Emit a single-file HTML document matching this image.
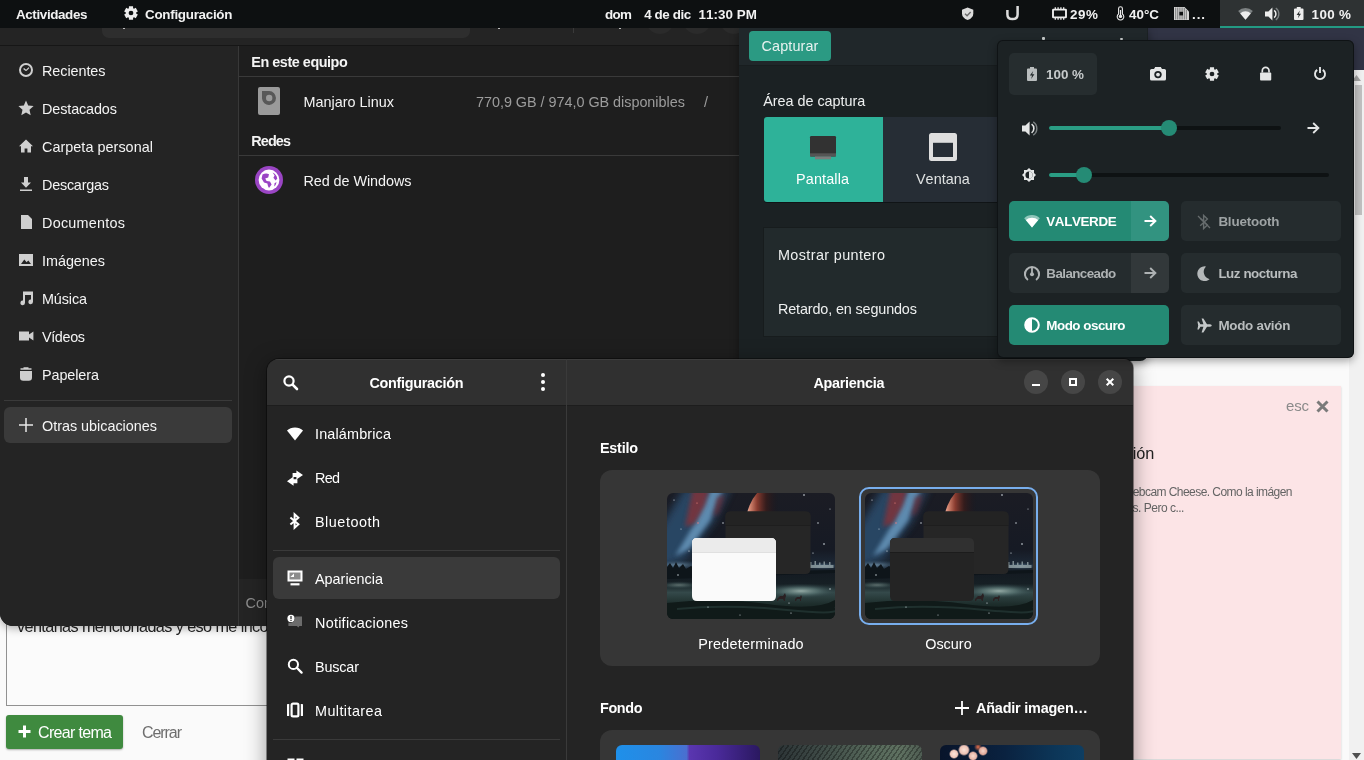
<!DOCTYPE html>
<html lang="es">
<head>
<meta charset="utf-8">
<title>Escritorio</title>
<style>
*{box-sizing:border-box;margin:0;padding:0}
html,body{width:1364px;height:760px;overflow:hidden;background:#fafafa}
body{position:relative;font-family:"Liberation Sans","DejaVu Sans",sans-serif;font-size:14.4px;color:#fff;line-height:1;font-kerning:none}
.abs{position:absolute}
.t{position:absolute;white-space:nowrap;line-height:20px;height:20px;will-change:transform}
.b{font-weight:bold}
svg{position:absolute;overflow:visible}
.win{position:absolute;overflow:hidden}
</style>
</head>
<body>
<div id="web" class="win" style="left:0;top:28px;width:1364px;height:732px;background:#fafafa">
<div class="abs" style="left:1140px;top:0px;width:224px;height:42px;background:#313445;"></div>
<div class="abs" style="left:1349px;top:42px;width:15px;height:690px;background:#f1f1f1;"></div>
<div class="abs" style="left:1355px;top:57px;width:7px;height:130px;background:#c1c1c1;"></div>
<svg style="left:1352px;top:47px;" width="9" height="6" viewBox="0 0 9 6"><path d="M0 6 L4.5 0 L9 6 Z" fill="#a3a3a3"/></svg>
<svg style="left:1352px;top:725px;" width="9" height="6" viewBox="0 0 9 6"><path d="M0 0 L9 0 L4.5 6 Z" fill="#505050"/></svg>
<div class="abs" style="left:1100px;top:358px;width:241px;height:373px;background:#fce4e6;box-shadow:0 1px 2px rgba(0,0,0,.18);"></div>
<div class="t" style="left:1286px;top:368px;font-size:15px;letter-spacing:-0.171px;color:#8a8a8a;">esc</div>
<svg style="left:1316.2px;top:372px;" width="13" height="13" viewBox="0 0 13 13"><path d="M1.5 1.5 L11.5 11.5 M11.5 1.5 L1.5 11.5" stroke="#7a7a7a" stroke-width="3" fill="none"/></svg>
<div class="t" style="left:1084px;top:415px;font-size:16.3px;padding-left:0.8px;margin-left:-1px;color:#222;">Discusión</div>
<div class="t" style="left:1125px;top:454px;font-size:12px;padding-left:0.6px;margin-left:-1px;letter-spacing:-0.553px;color:#646464;">webcam Cheese. Como la imágen</div>
<div class="t" style="left:1126px;top:470px;font-size:12px;padding-left:1.4px;margin-left:-1px;letter-spacing:-0.498px;color:#646464;">as. Pero c...</div>
<div class="abs" style="left:6px;top:532px;width:400px;height:146px;background:#fbfbfb;border:1px solid #919191;"></div>
<div class="t" style="left:17px;top:588px;font-size:16.2px;letter-spacing:-0.584px;color:#222;">ventanas mencionadas y eso me incomoda un poco</div>
<div class="abs" style="left:6px;top:686.5px;width:117px;height:34.5px;background:#3f8a3f;border-radius:3px;box-shadow:0 1px 2px rgba(0,0,0,.3);"></div>
<svg style="left:18px;top:697px;" width="13" height="13" viewBox="0 0 13 13"><path d="M6.5 0.5 V12.5 M0.5 6.5 H12.5" stroke="#fff" stroke-width="3" fill="none"/></svg>
<div class="t" style="left:38px;top:695px;font-size:16px;letter-spacing:-0.669px;color:#fff;">Crear tema</div>
<div class="t" style="left:142px;top:695px;font-size:16px;letter-spacing:-1.067px;color:#6e6e6e;">Cerrar</div>
</div>
<div id="topbar" class="win" style="left:0;top:0;width:1364px;height:28px;background:#0d1011;z-index:60">
<div class="t b" style="left:16px;top:5px;font-size:13.4px;letter-spacing:-0.372px;color:#f2f2f2;">Actividades</div>
<div class="t b" style="left:145px;top:5px;font-size:13.4px;letter-spacing:-0.276px;color:#f2f2f2;">Configuración</div>
<div class="t b" style="left:605px;top:5px;font-size:13.4px;letter-spacing:-0.643px;color:#f2f2f2;">dom</div>
<div class="t b" style="left:644px;top:5px;font-size:13.4px;padding-left:1.2px;margin-left:-1px;letter-spacing:-0.414px;color:#f2f2f2;">4 de dic</div>
<div class="t b" style="left:699px;top:5px;font-size:13.4px;padding-left:0.6px;margin-left:-1px;letter-spacing:0.035px;color:#f2f2f2;">11:30 PM</div>
<div class="t b" style="left:1070px;top:5px;font-size:13.4px;letter-spacing:0.590px;color:#f2f2f2;">29%</div>
<div class="t b" style="left:1129px;top:5px;font-size:13.4px;letter-spacing:0.020px;color:#f2f2f2;">40°C</div>
<div class="t b" style="left:1192px;top:5px;font-size:13.4px;letter-spacing:0.916px;color:#f2f2f2;">...</div>
<div class="abs" style="left:1220px;top:0px;width:144px;height:28px;background:#2e3233;"></div>
<div class="abs" style="left:1220px;top:26px;width:144px;height:2px;background:#239a83;"></div>
<div class="t b" style="left:1312px;top:5px;font-size:13.4px;padding-left:0.6px;margin-left:-1px;letter-spacing:0.351px;color:#f2f2f2;">100 %</div>
</div>
<div class="win" style="left:0;top:0;width:1364px;height:28px;z-index:61">
<svg style="left:124px;top:6px;" width="14" height="14" viewBox="0 0 16 16"><path fill-rule="evenodd" d="M5.59 2.61 L5.64 0.36 L10.36 0.36 L10.41 2.61 L11.46 3.22 L13.44 2.13 L15.80 6.23 L13.87 7.39 L13.87 8.61 L15.80 9.77 L13.44 13.87 L11.46 12.78 L10.41 13.39 L10.36 15.64 L5.64 15.64 L5.59 13.39 L4.54 12.78 L2.56 13.87 L0.20 9.77 L2.13 8.61 L2.13 7.39 L0.20 6.23 L2.56 2.13 L4.54 3.22 Z M8 5.30 A2.7 2.7 0 1 0 8 10.70 A2.7 2.7 0 1 0 8 5.30 Z" fill="#ededed"/></svg>
<svg style="left:962px;top:6.5px;" width="11.3" height="13.5" viewBox="0 0 12 13.5"><path d="M6 0 L12 2.600 V6.400 Q12 11 6 13.500 Q0 11 0 6.400 V2.600 Z" fill="#dcdcdc"/><path d="M3.200 6.800 L5.400 8.800 L9.200 5" fill="none" stroke="#6a6a6a" stroke-width="1.500"/></svg>
<svg style="left:1005.5px;top:5.8px;" width="13" height="14.5" viewBox="0 0 13 14.5"><path d="M1.400 4 V8.400 Q1.400 13.100 6.500 13.100 Q11.600 13.100 11.600 8.400 V0" fill="none" stroke="#dcdcdc" stroke-width="2.500"/></svg>
<svg style="left:1052px;top:6.5px;" width="15" height="13" viewBox="0 0 15 13"><rect x="1" y="2.600" width="13" height="7.800" rx=".4" fill="none" stroke="#ededed" stroke-width="1.900"/><path d="M3.300 0.300 V2 M6.100 0.300 V2 M8.900 0.300 V2 M11.700 0.300 V2 M3.300 11 V12.700 M6.100 11 V12.700 M8.900 11 V12.700 M11.700 11 V12.700" stroke="#ededed" stroke-width="1.300"/></svg>
<svg style="left:1116px;top:6px;" width="9" height="14" viewBox="0 0 9 14"><path d="M4.5 0.700 A1.900 1.900 0 0 1 6.400 2.600 V8 A3.300 3.300 0 1 1 2.600 8 V2.600 A1.900 1.900 0 0 1 4.500 0.700 Z" fill="none" stroke="#ededed" stroke-width="1.1"/><circle cx="4.5" cy="10.4" r="1.7" fill="#ededed"/><rect x="3.9" y="4" width="1.2" height="6" fill="#ededed"/></svg>
<svg style="left:1174px;top:6.5px;" width="15" height="13" viewBox="0 0 15 13"><path d="M0 0 H10.500 L15 4.500 V13 H0 Z" fill="#d4d4d4"/><path d="M1.600 0.500 V12.500 M3.400 0.500 V12.500 M5.200 0.500 V12.500 M7 0.500 V12.500 M8.800 0.500 V12.500 M10.600 1 V12.500 M12.400 3 V12.500" stroke="#0d1011" stroke-width=".55" opacity=".75"/><rect x="5.400" y="4.800" width="3.600" height="3.600" fill="#0d1011"/></svg>
<svg style="left:1237.5px;top:7px;" width="15" height="13" viewBox="0 0 15 13"><path d="M7.5 12.8 L0.2 4 Q3.200 1 7.500 1 Q11.800 1 14.800 4 Z" fill="#7d8283"/><path d="M7.500 12.800 L2.200 6.400 Q4.400 4.200 7.500 4.200 Q10.600 4.200 12.800 6.400 Z" fill="#ededed"/></svg>
<svg style="left:1264.5px;top:6.5px;" width="15" height="14" viewBox="0 0 15 14"><path d="M0 4.400 H3.400 L7.400 0.600 V13.400 L3.400 9.600 H0 Z" fill="#ededed"/><path d="M9.200 3.400 A4.600 4.600 0 0 1 9.200 10.600" fill="none" stroke="#ededed" stroke-width="1.500"/><path d="M10.800 1 A7.400 7.400 0 0 1 10.800 13" fill="none" stroke="#7d8283" stroke-width="1.300"/></svg>
<svg style="left:1294px;top:7px;" width="9.5" height="13" viewBox="0 0 9.5 13"><path d="M2.800 0 H6.700 V1.500 H8.500 Q9.500 1.500 9.500 2.500 V12 Q9.500 13 8.500 13 H1 Q0 13 0 12 V2.500 Q0 1.500 1 1.500 H2.800 Z" fill="#ededed"/><path d="M5.900 3.600 L2.600 8 H4.700 L3.900 11.200 L7 6.800 H4.900 Z" fill="#2e3233"/></svg>
</div>
<div id="files" class="win" style="left:0;top:28px;width:739px;height:598px;background:#1e1e1e;border-radius:0 0 0 13px;z-index:10;box-shadow:0 2px 10px rgba(0,0,0,.35)">
<div class="abs" style="left:0px;top:0px;width:739px;height:18px;background:#242424;"></div>
<div class="abs" style="left:0px;top:17px;width:739px;height:1px;background:#161616;"></div>
<div class="abs" style="left:102px;top:-8px;width:368px;height:18px;background:#2e2e2e;border-radius:7px;"></div>
<div class="abs" style="left:573px;top:0px;width:1px;height:5px;background:#3a3a3a;"></div>
<div class="abs" style="left:646px;top:-22.5px;width:28px;height:28px;background:#2b2b2b;border-radius:14px;"></div>
<div class="abs" style="left:683px;top:-22.5px;width:28px;height:28px;background:#2b2b2b;border-radius:14px;"></div>
<div class="abs" style="left:719.5px;top:-22.5px;width:28px;height:28px;background:#2b2b2b;border-radius:14px;"></div>
<div class="abs" style="left:123px;top:0px;width:2px;height:1px;background:#bdbdbd;"></div>
<div class="abs" style="left:498px;top:0px;width:2px;height:1px;background:#bdbdbd;"></div>
<div class="abs" style="left:619px;top:0px;width:2px;height:1px;background:#bdbdbd;"></div>
<div class="abs" style="left:0px;top:18px;width:238px;height:580px;background:#242424;"></div>
<div class="abs" style="left:238px;top:18px;width:1px;height:580px;background:#383838;"></div>
<div class="t" style="left:42px;top:33px;font-size:14.4px;letter-spacing:-0.067px;color:#f4f4f4;">Recientes</div>
<div class="t" style="left:42px;top:71px;font-size:14.4px;letter-spacing:-0.116px;color:#f4f4f4;">Destacados</div>
<div class="t" style="left:42px;top:109px;font-size:14.4px;letter-spacing:0.035px;color:#f4f4f4;">Carpeta personal</div>
<div class="t" style="left:42px;top:147px;font-size:14.4px;letter-spacing:-0.229px;color:#f4f4f4;">Descargas</div>
<div class="t" style="left:42px;top:185px;font-size:14.4px;letter-spacing:0.240px;color:#f4f4f4;">Documentos</div>
<div class="t" style="left:42px;top:223px;font-size:14.4px;letter-spacing:-0.034px;color:#f4f4f4;">Imágenes</div>
<div class="t" style="left:42px;top:261px;font-size:14.4px;letter-spacing:-0.122px;color:#f4f4f4;">Música</div>
<div class="t" style="left:42px;top:299px;font-size:14.4px;letter-spacing:-0.366px;color:#f4f4f4;">Vídeos</div>
<div class="t" style="left:42px;top:337px;font-size:14.4px;letter-spacing:-0.092px;color:#f4f4f4;">Papelera</div>
<div class="abs" style="left:4px;top:372px;width:228px;height:1px;background:#3a3a3a;"></div>
<div class="abs" style="left:4px;top:379px;width:228px;height:36px;background:#3a3a3a;border-radius:6px;"></div>
<div class="t" style="left:42px;top:388px;font-size:14.4px;letter-spacing:-0.016px;color:#f4f4f4;">Otras ubicaciones</div>
<svg style="left:18px;top:34px;" width="16" height="16" viewBox="0 0 16 16"><circle cx="8" cy="8" r="6" fill="none" stroke="#cfcfcf" stroke-width="2"/><path d="M8 8.6 L5.6 6.4 M8 8.6 L11 5.6" stroke="#cfcfcf" stroke-width="1.3" fill="none"/></svg>
<svg style="left:18px;top:72px;" width="16" height="16" viewBox="0 0 16 16"><path d="M8 0.6 L10.2 5.6 L15.6 6.1 L11.5 9.8 L12.7 15.2 L8 12.4 L3.3 15.2 L4.5 9.8 L0.4 6.1 L5.8 5.6 Z" fill="#cfcfcf"/></svg>
<svg style="left:18px;top:110px;" width="16" height="16" viewBox="0 0 16 16"><path d="M8 1.5 L1 8.2 H3 V14.5 H6.6 V10.4 H9.4 V14.5 H13 V8.2 H15 Z" fill="#cfcfcf"/></svg>
<svg style="left:18px;top:148px;" width="16" height="16" viewBox="0 0 16 16"><path d="M6 1 H10 V6.5 H13 L8 11.8 L3 6.5 H6 Z M2 13.4 H14 V15 H2 Z" fill="#cfcfcf"/></svg>
<svg style="left:18px;top:186px;" width="16" height="16" viewBox="0 0 16 16"><path d="M3 1 H10 L14 5 V15 H3 Z" fill="#cfcfcf"/></svg>
<svg style="left:18px;top:224px;" width="16" height="16" viewBox="0 0 16 16"><path d="M1 2 H15 V14 H1 Z" fill="#cfcfcf"/><path d="M3 12 L6.3 7.6 L8.6 10.2 L10.3 8.6 L13 12 Z" fill="#242424"/></svg>
<svg style="left:18px;top:262px;" width="16" height="16" viewBox="0 0 16 16"><path d="M5 1.5 H15 V11.8 A2.3 2.3 0 1 1 13 9.6 V5 H7 V12.8 A2.3 2.3 0 1 1 5 10.6 Z" fill="#cfcfcf"/></svg>
<svg style="left:18px;top:300px;" width="16" height="16" viewBox="0 0 16 16"><path d="M1 3.5 H11 V6.5 L15.4 3.6 V12.4 L11 9.5 V12.5 H1 Z" fill="#cfcfcf"/></svg>
<svg style="left:18px;top:338px;" width="16" height="16" viewBox="0 0 16 16"><path d="M2.5 2.2 H5.5 V1.2 H10.5 V2.2 H13.5 V3.8 H2.5 Z M2 5 H14 V11.5 Q14 14.8 10.8 14.8 H5.2 Q2 14.8 2 11.5 Z" fill="#cfcfcf"/></svg>
<svg style="left:18px;top:389px;" width="16" height="16" viewBox="0 0 16 16"><path d="M8 1 V15 M1 8 H15" stroke="#e8e8e8" stroke-width="1.5" fill="none"/></svg>
<div class="t b" style="left:251px;top:24px;font-size:14.4px;padding-left:1.3px;margin-left:-1px;letter-spacing:-0.455px;color:#f4f4f4;">En este equipo</div>
<div class="abs" style="left:239px;top:48px;width:500px;height:1px;background:#3a3a3a;"></div>
<div class="t" style="left:303px;top:64px;font-size:14.4px;padding-left:1.4px;margin-left:-1px;letter-spacing:0.012px;color:#f4f4f4;">Manjaro Linux</div>
<div class="t" style="left:476px;top:64px;font-size:14.4px;letter-spacing:-0.025px;color:#9c9c9c;">770,9 GB / 974,0 GB disponibles</div>
<div class="t" style="left:704px;top:64px;font-size:14.4px;color:#9c9c9c;">/</div>
<div class="t b" style="left:251px;top:103px;font-size:14.4px;padding-left:1.3px;margin-left:-1px;letter-spacing:-0.880px;color:#f4f4f4;">Redes</div>
<div class="abs" style="left:239px;top:127px;width:500px;height:1px;background:#3a3a3a;"></div>
<div class="t" style="left:303px;top:143px;font-size:14.4px;padding-left:1.4px;margin-left:-1px;letter-spacing:-0.050px;color:#f4f4f4;">Red de Windows</div>
<svg style="left:258px;top:59px;" width="22" height="28" viewBox="0 0 22 28"><rect x="0" y="0" width="22" height="28" rx="2" fill="#9a9a9a"/><path d="M4 4 H11.300 A7 7 0 1 1 4 11.600 Z" fill="#585858"/><circle cx="11.200" cy="11" r="3.200" fill="#9a9a9a"/></svg>
<svg style="left:255px;top:138px;" width="28" height="28" viewBox="0 0 28 28"><circle cx="14" cy="14" r="14" fill="#9a45c4"/><circle cx="14" cy="14" r="10.4" fill="#ffffff"/><path d="M7.5 8.5 Q11 6.5 14 8.2 L13.2 11.4 L10.2 12.6 L11.6 15 L15 15.6 L16.6 18.4 L14 22 Q12.6 20 12.4 17.6 L9 16.6 L6.6 12.6 Z M17.6 6.6 Q21.5 8.6 22.3 12.4 L20.6 14.6 L18.4 11.8 L19.6 9.4 Z M19.6 17 L21.6 16.2 Q21 19 19.2 20.6 Z" fill="#9a45c4"/></svg>
<div class="abs" style="left:239px;top:551px;width:500px;height:47px;background:#242424;"></div>
<div class="t" style="left:246px;top:565px;font-size:14.4px;padding-left:0.6px;margin-left:-1px;color:#8e8e8e;">Conectar</div>
</div>
<div id="shot" class="win" style="left:739px;top:28px;width:409px;height:333px;background:#1b2123;border-radius:0 0 8px 0;z-index:12;box-shadow:0 2px 10px rgba(0,0,0,.4)">
<div class="abs" style="left:0px;top:0px;width:408px;height:38px;background:#20272a;"></div>
<div class="abs" style="left:0px;top:37px;width:408px;height:1px;background:#181d1f;"></div>
<div class="abs" style="left:10px;top:3px;width:82px;height:30px;background:#2b9a83;border-radius:4px;"></div>
<div class="t" style="left:23px;top:8px;font-size:14.4px;padding-left:0.6px;margin-left:-1px;letter-spacing:0.111px;color:#e8f2f0;">Capturar</div>
<div class="abs" style="left:303px;top:9px;width:3px;height:3px;background:#c9cdcd;border-radius:1px;"></div>
<div class="abs" style="left:381px;top:10px;width:3px;height:2px;background:#c9cdcd;border-radius:1px;"></div>
<div class="t" style="left:24px;top:63px;font-size:14.4px;padding-left:1.3px;margin-left:-1px;letter-spacing:-0.033px;color:#eef0f0;">Área de captura</div>
<div class="abs" style="left:25px;top:89px;width:252px;height:86px;background:#101416;border-radius:3px;"></div>
<div class="abs" style="left:25px;top:89px;width:119px;height:85px;background:#2eb299;border-radius:3px 0 0 3px;"></div>
<div class="abs" style="left:144px;top:89px;width:130px;height:85px;background:#262d35;"></div>
<svg style="left:71px;top:108px;" width="26" height="23.5" viewBox="0 0 26 23.5"><rect x="0" y="0" width="26" height="20.500" rx="1.200" fill="#323232"/><rect x="0" y="17.300" width="26" height="3.200" fill="#555555"/><rect x="5" y="20.500" width="16" height="2.800" fill="#7c7c7c"/></svg>
<div class="t" style="left:57px;top:141px;font-size:14.4px;letter-spacing:0.137px;color:#ffffff;">Pantalla</div>
<svg style="left:190px;top:105px;" width="28" height="28" viewBox="0 0 28 28"><rect x="0" y="0" width="28" height="28" rx="2.500" fill="#dedede"/><rect x="4" y="9.800" width="20" height="14.200" fill="#262d35"/></svg>
<div class="t" style="left:177px;top:141px;font-size:14.4px;letter-spacing:0.024px;color:#dfe2e2;">Ventana</div>
<div class="abs" style="left:24px;top:199px;width:300px;height:110px;background:#222a2c;border:1px solid #171c1d;"></div>
<div class="t" style="left:39px;top:217px;font-size:14.4px;letter-spacing:0.383px;color:#eef0f0;">Mostrar puntero</div>
<div class="t" style="left:39px;top:271px;font-size:14.4px;letter-spacing:-0.142px;color:#eef0f0;">Retardo, en segundos</div>
</div>
<div id="qs" class="win" style="left:997px;top:40px;width:356.5px;height:317.5px;background:#1c2224;border-radius:6px;z-index:30;box-shadow:inset 0 0 0 1px rgba(5,8,9,.55),0 3px 8px rgba(0,0,0,.35)">
<div class="abs" style="left:12px;top:13px;width:88px;height:42px;background:#262d2f;border-radius:5px;"></div>
<svg style="left:30px;top:27px;" width="10" height="14" viewBox="0 0 10 14"><path d="M3 0 H7 V1.6 H9 Q10 1.6 10 2.6 V13 Q10 14 9 14 H1 Q0 14 0 13 V2.6 Q0 1.6 1 1.6 H3 Z" fill="#b9bdbe"/><path d="M6.2 4 L2.8 8.6 H5 L4.2 12 L7.4 7.2 H5.2 Z" fill="#262d2f"/></svg>
<div class="t b" style="left:49px;top:25px;font-size:13.4px;color:#c6cacb;">100 %</div>
<svg style="left:152.5px;top:27px;" width="16" height="13.5" viewBox="0 0 16 13.5"><path d="M5.2 0 H10.8 L12 2 H14.4 Q16 2 16 3.6 V12 Q16 13.5 14.4 13.5 H1.6 Q0 13.5 0 12 V3.6 Q0 2 1.6 2 H4 Z" fill="#e4e6e6"/><circle cx="8" cy="7.6" r="3.7" fill="#1c2224"/><circle cx="8" cy="7.6" r="1.9" fill="#e4e6e6"/></svg>
<svg style="left:207.5px;top:27px;" width="14" height="14" viewBox="0 0 16 16"><path fill-rule="evenodd" d="M5.59 2.61 L5.64 0.36 L10.36 0.36 L10.41 2.61 L11.46 3.22 L13.44 2.13 L15.80 6.23 L13.87 7.39 L13.87 8.61 L15.80 9.77 L13.44 13.87 L11.46 12.78 L10.41 13.39 L10.36 15.64 L5.64 15.64 L5.59 13.39 L4.54 12.78 L2.56 13.87 L0.20 9.77 L2.13 8.61 L2.13 7.39 L0.20 6.23 L2.56 2.13 L4.54 3.22 Z M8 5.30 A2.7 2.7 0 1 0 8 10.70 A2.7 2.7 0 1 0 8 5.30 Z" fill="#e4e6e6"/></svg>
<svg style="left:263px;top:27px;" width="11.3" height="13.5" viewBox="0 0 12 14.5"><path d="M2.4 6 V4 A3.6 3.6 0 0 1 9.6 4 V6" fill="none" stroke="#e4e6e6" stroke-width="1.8"/><rect x="0" y="6" width="12" height="8.5" rx="1" fill="#e4e6e6"/></svg>
<svg style="left:316.5px;top:26.799999999999997px;" width="12" height="12.6" viewBox="0 0 13 14"><path d="M3.4 3.2 A5.6 5.6 0 1 0 9.6 3.2" fill="none" stroke="#e4e6e6" stroke-width="2.100"/><path d="M6.500 0 V6.600" stroke="#e4e6e6" stroke-width="2.100"/></svg>
<svg style="left:25px;top:80.5px;" width="15" height="15" viewBox="0 0 15 15"><path d="M0 4.6 H3.4 L7.6 0.6 V14.4 L3.4 10.4 H0 Z" fill="#e4e6e6"/><path d="M9.6 3.2 A5.2 5.2 0 0 1 9.6 11.8" fill="none" stroke="#e4e6e6" stroke-width="1.6"/><path d="M11.2 0.8 A8 8 0 0 1 11.2 14.2" fill="none" stroke="#7c8283" stroke-width="1.4"/></svg>
<div class="abs" style="left:52px;top:86px;width:232px;height:4px;background:#0e1213;border-radius:2px;"></div>
<div class="abs" style="left:52px;top:86px;width:120px;height:4px;background:#2a9d84;border-radius:2px;"></div>
<div class="abs" style="left:164.4000000000001px;top:80px;width:16px;height:16px;background:#258b75;border-radius:8px;"></div>
<svg style="left:310px;top:81.5px;" width="12" height="12" viewBox="0 0 12 12"><path d="M0.5 6 H11 M6.2 1 L11.4 6 L6.2 11" fill="none" stroke="#e4e6e6" stroke-width="1.8"/></svg>
<svg style="left:25px;top:128px;" width="14" height="14" viewBox="0 0 14 14"><path d="M7 0 L9.1 2 H12 V4.9 L14 7 L12 9.1 V12 H9.1 L7 14 L4.9 12 H2 V9.1 L0 7 L2 4.9 V2 H4.9 Z" fill="#e4e6e6"/><circle cx="7" cy="7" r="3.6" fill="#1c2224"/><path d="M7 3.4 A3.6 3.6 0 0 1 7 10.6 Z" fill="#e4e6e6"/></svg>
<div class="abs" style="left:52px;top:133px;width:280px;height:4px;background:#0e1213;border-radius:2px;"></div>
<div class="abs" style="left:52px;top:133px;width:34px;height:4px;background:#2a9d84;border-radius:2px;"></div>
<div class="abs" style="left:78.5px;top:127px;width:16px;height:16px;background:#258b75;border-radius:8px;"></div>
<div class="abs" style="left:12px;top:161px;width:122px;height:40px;background:#248a74;border-radius:5px 0 0 5px;"></div>
<div class="abs" style="left:134px;top:161px;width:38px;height:40px;background:#329380;border-radius:0 5px 5px 0;"></div>
<div class="abs" style="left:184px;top:161px;width:160px;height:40px;background:#252c2e;border-radius:5px;"></div>
<div class="abs" style="left:12px;top:213px;width:122px;height:40px;background:#252c2e;border-radius:5px 0 0 5px;"></div>
<div class="abs" style="left:134px;top:213px;width:38px;height:40px;background:#32383a;border-radius:0 5px 5px 0;"></div>
<div class="abs" style="left:184px;top:213px;width:160px;height:40px;background:#252c2e;border-radius:5px;"></div>
<div class="abs" style="left:12px;top:265px;width:160px;height:40px;background:#248a74;border-radius:5px;"></div>
<div class="abs" style="left:184px;top:265px;width:160px;height:40px;background:#252c2e;border-radius:5px;"></div>
<div class="t b" style="left:49px;top:172px;font-size:13.4px;padding-left:1.3px;margin-left:-1px;letter-spacing:-0.368px;color:#ffffff;">VALVERDE</div>
<div class="t b" style="left:221px;top:172px;font-size:13.4px;padding-left:1.4px;margin-left:-1px;letter-spacing:-0.190px;color:#9ea3a4;">Bluetooth</div>
<div class="t b" style="left:49px;top:224px;font-size:13.4px;padding-left:1.3px;margin-left:-1px;letter-spacing:-0.580px;color:#aeb2b3;">Balanceado</div>
<div class="t b" style="left:221px;top:224px;font-size:13.4px;padding-left:1.4px;margin-left:-1px;letter-spacing:-0.447px;color:#b9bdbe;">Luz nocturna</div>
<div class="t b" style="left:49px;top:276px;font-size:13.4px;padding-left:1.3px;margin-left:-1px;letter-spacing:-0.492px;color:#ffffff;">Modo oscuro</div>
<div class="t b" style="left:221px;top:276px;font-size:13.4px;padding-left:1.4px;margin-left:-1px;letter-spacing:-0.271px;color:#b9bdbe;">Modo avión</div>
<svg style="left:147px;top:175px;" width="12" height="12" viewBox="0 0 12 12"><path d="M0.5 6 H11 M6.2 1 L11.4 6 L6.2 11" fill="none" stroke="#ffffff" stroke-width="1.9"/></svg>
<svg style="left:147px;top:227px;" width="12" height="12" viewBox="0 0 12 12"><path d="M0.5 6 H11 M6.2 1 L11.4 6 L6.2 11" fill="none" stroke="#aeb2b3" stroke-width="1.9"/></svg>
<svg style="left:27px;top:174px;" width="16" height="14" viewBox="0 0 16 14"><path d="M8 13.6 L0.2 4.2 Q3.4 1 8 1 Q12.6 1 15.8 4.2 Z" fill="#8fc6ba"/><path d="M8 13.6 L1.8 6.1 Q4.4 3.8 8 3.8 Q11.6 3.8 14.2 6.1 Z" fill="#ffffff"/></svg>
<svg style="left:27px;top:225.7px;" width="16" height="15" viewBox="0 0 16 15"><path d="M3.930 14 A7.100 7.100 0 1 1 12.070 14" fill="none" stroke="#b0b4b5" stroke-width="2"/><circle cx="8" cy="8.200" r="2" fill="#b0b4b5"/><path d="M8 2 V8" stroke="#b0b4b5" stroke-width="1.800"/></svg>
<svg style="left:27px;top:277px;" width="16" height="16" viewBox="0 0 16 16"><circle cx="8" cy="8" r="6.800" fill="none" stroke="#fff" stroke-width="2"/><path d="M8 1 A7 7 0 0 0 8 15 Z" fill="#fff"/></svg>
<svg style="left:200px;top:173.5px;" width="14" height="16" viewBox="0 0 14 16"><path d="M3.2 4.2 L10.4 11 L6.6 14.6 V1.4 L10.4 5 L3.2 11.8" fill="none" stroke="#666c6d" stroke-width="1.4"/><path d="M1 2 L13 14" stroke="#666c6d" stroke-width="1.3"/></svg>
<svg style="left:200px;top:226px;" width="13" height="15" viewBox="0 0 13 15"><path d="M9 0.4 A7.4 7.4 0 1 0 12.6 13.2 A7.6 7.6 0 0 1 9 0.4 Z" fill="#b4b8b9"/></svg>
<svg style="left:199.5px;top:278px;" width="15" height="15" viewBox="0 0 15 15"><path d="M0.4 3.6 H1.8 L3.4 6.2 H6.4 L4.6 0.4 H6.4 L10 6.2 H13 Q14.8 6.4 14.8 7.5 Q14.8 8.6 13 8.8 H10 L6.4 14.6 H4.6 L6.4 8.8 H3.4 L1.8 11.4 H0.4 L1.2 7.5 Z" fill="#c4c8c9"/></svg>
</div>
<div id="set" class="win" style="left:267px;top:359px;width:866px;height:420px;background:#242424;border-radius:12px 9px 0 0;z-index:20;box-shadow:0 0 0 1px rgba(0,0,0,.4),0 4px 20px 2px rgba(0,0,0,.34)">
<div class="abs" style="left:0px;top:0px;width:866px;height:46px;background:#303030;"></div>
<div class="abs" style="left:0px;top:0px;width:866px;height:1px;background:#3d3d3d;"></div>
<div class="abs" style="left:0px;top:46px;width:866px;height:1px;background:#1d1d1d;"></div>
<div class="abs" style="left:299px;top:0px;width:1px;height:420px;background:#3a3a3a;"></div>
<svg style="left:16px;top:15.5px;" width="15" height="15" viewBox="0 0 15 15"><circle cx="6" cy="6" r="4.6" fill="none" stroke="#ffffff" stroke-width="2.2"/><path d="M9.6 9.6 L14 14" stroke="#ffffff" stroke-width="2.6" stroke-linecap="round"/></svg>
<div class="t b" style="left:103px;top:14px;font-size:14.4px;padding-left:0.5px;margin-left:-1px;letter-spacing:-0.300px;">Configuración</div>
<div class="abs" style="left:274px;top:14px;width:4px;height:4px;background:#ffffff;border-radius:2px;"></div>
<div class="abs" style="left:274px;top:21px;width:4px;height:4px;background:#ffffff;border-radius:2px;"></div>
<div class="abs" style="left:274px;top:28px;width:4px;height:4px;background:#ffffff;border-radius:2px;"></div>
<div class="t b" style="left:547px;top:14px;font-size:14.4px;padding-left:0.5px;margin-left:-1px;letter-spacing:-0.292px;">Apariencia</div>
<div class="abs" style="left:757px;top:11px;width:24px;height:24px;background:#464646;border-radius:12px;"></div>
<div class="abs" style="left:794px;top:11px;width:24px;height:24px;background:#464646;border-radius:12px;"></div>
<div class="abs" style="left:831px;top:11px;width:24px;height:24px;background:#464646;border-radius:12px;"></div>
<div class="abs" style="left:765px;top:25px;width:8px;height:2px;background:#ffffff;"></div>
<div class="abs" style="left:802px;top:19px;width:8px;height:8px;background:transparent;border:2px solid #ffffff;"></div>
<svg style="left:839px;top:19px;" width="8" height="8" viewBox="0 0 8 8"><path d="M0.7 0.7 L7.3 7.3 M7.3 0.7 L0.7 7.3" stroke="#ffffff" stroke-width="2" fill="none"/></svg>
<div class="abs" style="left:6px;top:191px;width:287px;height:1px;background:#3a3a3a;"></div>
<div class="abs" style="left:6px;top:198px;width:287px;height:42px;background:#3a3a3a;border-radius:6px;"></div>
<div class="abs" style="left:6px;top:380px;width:287px;height:1px;background:#3a3a3a;"></div>
<div class="t" style="left:48px;top:65px;font-size:14.4px;letter-spacing:0.157px;">Inalámbrica</div>
<div class="t" style="left:48px;top:109px;font-size:14.4px;letter-spacing:-0.708px;">Red</div>
<div class="t" style="left:48px;top:153px;font-size:14.4px;letter-spacing:0.519px;">Bluetooth</div>
<div class="t" style="left:48px;top:210px;font-size:14.4px;">Apariencia</div>
<div class="t" style="left:48px;top:254px;font-size:14.4px;letter-spacing:0.258px;">Notificaciones</div>
<div class="t" style="left:48px;top:298px;font-size:14.4px;letter-spacing:-0.164px;">Buscar</div>
<div class="t" style="left:48px;top:342px;font-size:14.4px;letter-spacing:0.419px;">Multitarea</div>
<svg style="left:20px;top:67px;" width="16" height="16" viewBox="0 0 16 16"><path d="M8 14.4 L0 4.6 Q3.2 1.4 8 1.4 Q12.8 1.4 16 4.6 Z" fill="#ffffff"/></svg>
<svg style="left:20px;top:110.5px;" width="16" height="16" viewBox="0 0 16 16"><path d="M9.4 0.4 L16 5 L9.4 9.6 V7 H5.6 V3 H9.4 Z M6.6 6.6 V9.2 H10.4 V13.200 H6.600 V15.800 L0 11.200 Z" fill="#ffffff"/></svg>
<svg style="left:20px;top:154px;" width="16" height="16" viewBox="0 0 16 16"><path d="M3.4 4.4 L11.4 11.2 L7.6 14.8 V1.2 L11.4 4.8 L3.4 11.6" fill="none" stroke="#ffffff" stroke-width="2"/></svg>
<svg style="left:20px;top:211px;" width="16" height="16" viewBox="0 0 16 16"><rect x="2" y="2" width="12" height="8" fill="#8c8c8c"/><path d="M0.5 0.5 H15.5 V11.5 H0.5 Z M2.5 2.5 V9.5 H13.5 V2.5 Z" fill-rule="evenodd" fill="#ffffff"/><path d="M3.4 7 L7 3.4 V7 Z" fill="#ffffff"/><rect x="3.5" y="13.2" width="9" height="2.2" fill="#ffffff"/></svg>
<svg style="left:20px;top:255px;" width="16" height="16" viewBox="0 0 16 16"><circle cx="4" cy="4.4" r="3.6" fill="#ffffff"/><rect x="3.4" y="2" width="1.2" height="3" fill="#242424"/><rect x="3.4" y="5.8" width="1.2" height="1.2" fill="#242424"/><path d="M8.400 2.600 H15 V12 H12.400 L11.200 13.600 L10 12 H1.400 V8.600 Q7.400 10 8.400 2.600 Z" fill="#6c6c6c"/></svg>
<svg style="left:20px;top:299px;" width="16" height="16" viewBox="0 0 16 16"><circle cx="6.4" cy="6.4" r="4.6" fill="none" stroke="#ffffff" stroke-width="2"/><path d="M9.8 9.8 L14.6 14.6" stroke="#ffffff" stroke-width="2.3" stroke-linecap="round"/></svg>
<svg style="left:20px;top:343px;" width="16" height="16" viewBox="0 0 16 16"><rect x="4.600" y="1.600" width="6.800" height="12.800" rx="1.400" fill="none" stroke="#ffffff" stroke-width="2.200"/><rect x="0" y="2" width="2.200" height="12" rx=".6" fill="#ffffff"/><rect x="13.800" y="2" width="2.200" height="12" rx=".6" fill="#ffffff"/></svg>
<svg style="left:20px;top:399px;" width="16" height="16" viewBox="0 0 16 16"><rect x="0.5" y="0.5" width="7" height="7" fill="#ffffff"/><rect x="9.5" y="0.5" width="7" height="7" fill="#ffffff"/></svg>
<div class="t b" style="left:333px;top:79px;font-size:14.4px;letter-spacing:-0.241px;">Estilo</div>
<div class="abs" style="left:333px;top:111px;width:500px;height:196px;background:#363636;border-radius:12px;"></div>
<div class="t" style="left:431px;top:275px;font-size:14.4px;padding-left:1.2px;margin-left:-1px;letter-spacing:0.234px;">Predeterminado</div>
<div class="t" style="left:658px;top:275px;font-size:14.4px;padding-left:1.2px;margin-left:-1px;letter-spacing:0.017px;">Oscuro</div>
<div class="t b" style="left:333px;top:339px;font-size:14.4px;letter-spacing:-0.370px;">Fondo</div>
<svg style="left:688px;top:341.5px;" width="14" height="14" viewBox="0 0 14 14"><path d="M7 0 V14 M0 7 H14" stroke="#ffffff" stroke-width="1.8" fill="none"/></svg>
<div class="t b" style="left:709px;top:339px;font-size:14.4px;letter-spacing:-0.186px;">Añadir imagen…</div>
<div class="abs" style="left:333px;top:371px;width:500px;height:60px;background:#363636;border-radius:12px;"></div>
<svg style="left:400px;top:134px;" width="168" height="126" viewBox="0 0 168 126"><defs>
<linearGradient id="wsky" x1="0" y1="0" x2="0" y2="1"><stop offset="0" stop-color="#1b1c24"/><stop offset=".45" stop-color="#161a24"/><stop offset=".58" stop-color="#1e2a38"/><stop offset=".64" stop-color="#141b22"/><stop offset=".72" stop-color="#161f24"/><stop offset=".79" stop-color="#34494a"/><stop offset=".88" stop-color="#1e2e2c"/><stop offset="1" stop-color="#0d1314"/></linearGradient>
<linearGradient id="wpl" x1="0" y1="0" x2="1" y2="0"><stop offset="0" stop-color="#f4c4b4"/><stop offset=".04" stop-color="#d88a74"/><stop offset=".12" stop-color="#8a3c30"/><stop offset=".22" stop-color="#3a1c1a" stop-opacity=".8"/><stop offset=".36" stop-color="#1a171c" stop-opacity="0"/></linearGradient>
<radialGradient id="wgl" cx=".5" cy=".5" r=".5"><stop offset="0" stop-color="#9ab0aa" stop-opacity=".95"/><stop offset=".45" stop-color="#5e7a78" stop-opacity=".7"/><stop offset="1" stop-color="#24383c" stop-opacity="0"/></radialGradient>
<radialGradient id="wgl2" cx=".5" cy=".5" r=".5"><stop offset="0" stop-color="#7090a8" stop-opacity=".9"/><stop offset="1" stop-color="#304a60" stop-opacity="0"/></radialGradient>
<filter id="wb4" x="-40%" y="-40%" width="180%" height="180%"><feGaussianBlur stdDeviation="4"/></filter>
<filter id="wb2" x="-40%" y="-40%" width="180%" height="180%"><feGaussianBlur stdDeviation="2"/></filter>
<clipPath id="wclip"><rect x="0" y="0" width="168" height="126" rx="6"/></clipPath>
</defs><g clip-path="url(#wclip)">
<rect width="168" height="126" fill="url(#wsky)"/>
<path d="M18 -6 L64 -6 L46 30 L18 66 L-10 76 L-10 40 Z" fill="#2a4868" filter="url(#wb4)" opacity=".95"/>
<path d="M44 -4 L56 -4 L43 28 L22 56 L8 63 L28 30 Z" fill="#6c9cc2" filter="url(#wb2)" opacity=".8"/>
<path d="M26 -4 L42 -4 L38 12 L28 30 L18 34 L22 14 Z" fill="#843238" filter="url(#wb2)" opacity=".8"/>
<path d="M50 4 L58 2 L52 20 L46 24 Z" fill="#6a2c34" filter="url(#wb2)" opacity=".7"/>
<circle cx="125" cy="30" r="46" fill="url(#wpl)"/>
<ellipse cx="10" cy="72" rx="26" ry="5" fill="url(#wgl2)"/>
<ellipse cx="156" cy="73" rx="16" ry="3.500" fill="url(#wgl2)" opacity=".9"/>
<path d="M0 74 L3 70 L6 75 L9 69 L12 75 L16 71 L19 76 L24 73 L30 77 L40 78 L60 79 L168 77 L168 80 L60 84 L0 86 Z" fill="#0e151a"/>
<path d="M143 72 v-3 h1.500 v3 h3 v-4 h1.500 v4 h3 v-2.500 h1.500 v2.500 h3 v-3.500 h1.500 v3.500 h4 v-3 h1.500 v3 h3 v3 h-26 z" fill="#93a2a6" opacity=".8"/>
<ellipse cx="134" cy="98" rx="38" ry="7.500" fill="url(#wgl)"/>
<ellipse cx="12" cy="92" rx="22" ry="4" fill="url(#wgl)" opacity=".55"/>
<path d="M0 110 Q50 104 100 111 T168 107 L168 126 L0 126 Z" fill="#101a19"/>
<path d="M10 116 Q60 111 120 117 T168 114" fill="none" stroke="#2a403c" stroke-width="2" opacity=".6"/>
<g fill="#e4ecf2"><circle cx="137" cy="2" r=".8"/><circle cx="151" cy="30" r=".7"/><circle cx="157" cy="51" r=".8"/><circle cx="146" cy="60" r=".6"/><circle cx="7" cy="7" r=".6"/><circle cx="14" cy="36" r=".5"/><circle cx="56" cy="30" r=".7"/><circle cx="163" cy="96" r=".7"/><circle cx="124" cy="120" r=".6"/><circle cx="41" cy="114" r=".6"/><circle cx="163" cy="16" r=".5"/><circle cx="11" cy="82" r=".7"/><circle cx="30" cy="10" r=".6" fill="#ff8a80"/><circle cx="31" cy="30" r=".7" fill="#ff7a78"/><circle cx="22" cy="58" r=".6"/><circle cx="122" cy="110" r=".6"/><circle cx="73" cy="122" r=".5"/></g>
<path d="M110 106 l3 -3 l3 0 l2 -3 l1 3 l-1 3 l0 2 l-1 0 l-1 -2 l-4 0 l-1 2 l-1 0 z M128 106 l2 -2 l3 0 l1 -2 l1 2 l-1 2 l0 2 l-1 0 l0 -2 l-3 0 l-1 2 l-1 0 z" fill="#2a2022"/>
</g><path d="M63.500 18.500 H138.500 Q143.500 18.500 143.500 23.500 V76 Q143.500 81 138.500 81 H63.500 Q58.500 81 58.500 76 V23.500 Q58.500 18.500 63.500 18.500 Z" fill="#262626"/><path d="M63.500 18.500 H138.500 Q143.500 18.500 143.500 23.500 V32 H58.500 V23.500 Q58.500 18.500 63.500 18.500 Z" fill="#232323"/><rect x="58.500" y="32" width="85" height="0.700" fill="#1c1c1c"/><path d="M30 45 H104 Q109 45 109 50 V103 Q109 108 104 108 H30 Q25 108 25 103 V50 Q25 45 30 45 Z" fill="#fafafa"/><path d="M30 45 H104 Q109 45 109 50 V59 H25 V50 Q25 45 30 45 Z" fill="#ebebeb"/><rect x="25" y="59" width="84" height="0.700" fill="#d4d4d4"/></svg>
<div class="abs" style="left:592px;top:128px;width:179px;height:138px;background:transparent;border-radius:10px;border:2.5px solid #78aeed;"></div>
<svg style="left:598px;top:134px;" width="168" height="126" viewBox="0 0 168 126"><g clip-path="url(#wclip)">
<rect width="168" height="126" fill="url(#wsky)"/>
<path d="M18 -6 L64 -6 L46 30 L18 66 L-10 76 L-10 40 Z" fill="#2a4868" filter="url(#wb4)" opacity=".95"/>
<path d="M44 -4 L56 -4 L43 28 L22 56 L8 63 L28 30 Z" fill="#6c9cc2" filter="url(#wb2)" opacity=".8"/>
<path d="M26 -4 L42 -4 L38 12 L28 30 L18 34 L22 14 Z" fill="#843238" filter="url(#wb2)" opacity=".8"/>
<path d="M50 4 L58 2 L52 20 L46 24 Z" fill="#6a2c34" filter="url(#wb2)" opacity=".7"/>
<circle cx="125" cy="30" r="46" fill="url(#wpl)"/>
<ellipse cx="10" cy="72" rx="26" ry="5" fill="url(#wgl2)"/>
<ellipse cx="156" cy="73" rx="16" ry="3.500" fill="url(#wgl2)" opacity=".9"/>
<path d="M0 74 L3 70 L6 75 L9 69 L12 75 L16 71 L19 76 L24 73 L30 77 L40 78 L60 79 L168 77 L168 80 L60 84 L0 86 Z" fill="#0e151a"/>
<path d="M143 72 v-3 h1.500 v3 h3 v-4 h1.500 v4 h3 v-2.500 h1.500 v2.500 h3 v-3.500 h1.500 v3.500 h4 v-3 h1.500 v3 h3 v3 h-26 z" fill="#93a2a6" opacity=".8"/>
<ellipse cx="134" cy="98" rx="38" ry="7.500" fill="url(#wgl)"/>
<ellipse cx="12" cy="92" rx="22" ry="4" fill="url(#wgl)" opacity=".55"/>
<path d="M0 110 Q50 104 100 111 T168 107 L168 126 L0 126 Z" fill="#101a19"/>
<path d="M10 116 Q60 111 120 117 T168 114" fill="none" stroke="#2a403c" stroke-width="2" opacity=".6"/>
<g fill="#e4ecf2"><circle cx="137" cy="2" r=".8"/><circle cx="151" cy="30" r=".7"/><circle cx="157" cy="51" r=".8"/><circle cx="146" cy="60" r=".6"/><circle cx="7" cy="7" r=".6"/><circle cx="14" cy="36" r=".5"/><circle cx="56" cy="30" r=".7"/><circle cx="163" cy="96" r=".7"/><circle cx="124" cy="120" r=".6"/><circle cx="41" cy="114" r=".6"/><circle cx="163" cy="16" r=".5"/><circle cx="11" cy="82" r=".7"/><circle cx="30" cy="10" r=".6" fill="#ff8a80"/><circle cx="31" cy="30" r=".7" fill="#ff7a78"/><circle cx="22" cy="58" r=".6"/><circle cx="122" cy="110" r=".6"/><circle cx="73" cy="122" r=".5"/></g>
<path d="M110 106 l3 -3 l3 0 l2 -3 l1 3 l-1 3 l0 2 l-1 0 l-1 -2 l-4 0 l-1 2 l-1 0 z M128 106 l2 -2 l3 0 l1 -2 l1 2 l-1 2 l0 2 l-1 0 l0 -2 l-3 0 l-1 2 l-1 0 z" fill="#2a2022"/>
</g><path d="M63.500 18.500 H138.500 Q143.500 18.500 143.500 23.500 V76 Q143.500 81 138.500 81 H63.500 Q58.500 81 58.500 76 V23.500 Q58.500 18.500 63.500 18.500 Z" fill="#262626"/><path d="M63.500 18.500 H138.500 Q143.500 18.500 143.500 23.500 V32 H58.500 V23.500 Q58.500 18.500 63.500 18.500 Z" fill="#232323"/><rect x="58.500" y="32" width="85" height="0.700" fill="#1c1c1c"/><path d="M30 45 H104 Q109 45 109 50 V103 Q109 108 104 108 H30 Q25 108 25 103 V50 Q25 45 30 45 Z" fill="#242424"/><path d="M30 45 H104 Q109 45 109 50 V59 H25 V50 Q25 45 30 45 Z" fill="#303030"/><rect x="25" y="59" width="84" height="0.700" fill="#1a1a1a"/></svg>
<div class="abs" style="left:349px;top:386px;width:144px;height:40px;border-radius:6px 6px 0 0;background:linear-gradient(90deg,#1e90ea 0%,#2a86e0 30%,#4a6fd0 49%,#5a36b0 51%,#4a2a9a 70%,#2a1860 100%)"></div>
<div class="abs" style="left:511px;top:386px;width:144px;height:40px;border-radius:6px 6px 0 0;background:repeating-linear-gradient(125deg,rgba(0,0,0,.3) 0 1.5px,rgba(0,0,0,0) 1.5px 4px),linear-gradient(90deg,#2c3436 0%,#3e4a46 30%,#56685a 65%,#5e7060 85%,#4e5c52 100%)"></div>
<div class="abs" style="left:673px;top:386px;width:144px;height:40px;border-radius:6px 6px 0 0;background:radial-gradient(circle 5px at 14px 9px,#fbe6dc 0%,#f0c8ba 70%,rgba(220,160,150,0) 100%),radial-gradient(circle 6px at 24px 5px,#fae2d8 0%,#eec2b4 70%,rgba(220,160,150,0) 100%),radial-gradient(circle 5px at 33px 11px,#f8dcd0 0%,#e8b6a8 70%,rgba(220,160,150,0) 100%),radial-gradient(circle 5px at 43px 6px,#f6d6ca 0%,#e0a898 70%,rgba(220,160,150,0) 100%),radial-gradient(circle 4px at 38px 2px,#e8704a 0%,rgba(220,100,70,0) 100%),linear-gradient(90deg,#08142a 0%,#0a2240 45%,#0c3658 80%,#0e3e62 100%)"></div>
</div>
</body>
</html>
